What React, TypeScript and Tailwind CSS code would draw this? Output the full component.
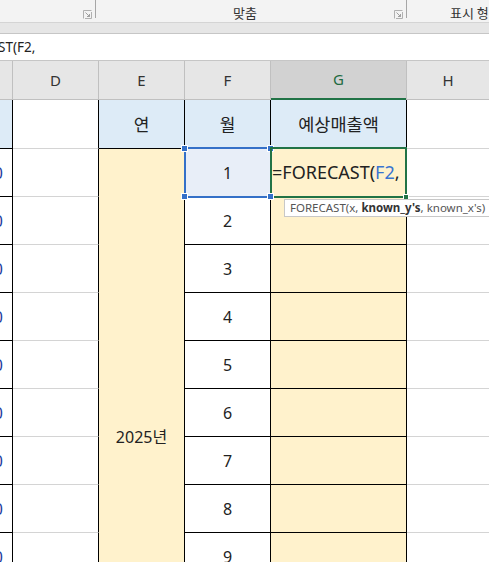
import React from "react";

const Launcher = () => (
  <svg width="9" height="9" viewBox="0 0 9 9" fill="none">
    <path d="M0.5 8.5V0.5H8.5" stroke="#b0b0b0" strokeWidth="1" />
    <path d="M8.5 2V8.5H2" stroke="#b0b0b0" strokeWidth="1" />
    <path d="M2.5 2.5L6.8 6.8" stroke="#a0a0a0" strokeWidth="1" />
    <path d="M4 6.5H6.5V4" stroke="#a0a0a0" strokeWidth="1" />
  </svg>
);

const rows = [1, 2, 3, 4, 5, 6, 7, 8, 9];

export default function App() {
  return (
    <div className="relative w-[489px] h-[562px] overflow-hidden bg-white font-['Noto_Sans','Noto_Sans_CJK_KR',sans-serif] text-[#222]">
      {/* Ribbon */}
      <div className="flex h-[23px] bg-[#f3f3f3] border-b border-[#d4d4d4] overflow-hidden">
        <div className="w-[96px] shrink-0 flex justify-end items-start">
          <div className="mt-[10px] mr-[3px]">
            <Launcher />
          </div>
          <div className="w-px h-[18px] bg-[#a6a6a6]" />
        </div>
        <div className="w-[311px] shrink-0 flex items-start">
          <div className="flex-1 pt-[4px] text-center text-[13px] leading-[17px] font-['Noto_Sans_CJK_KR',sans-serif] text-[#333]">
            맞춤
          </div>
          <div className="mt-[10px] mr-[3px]">
            <Launcher />
          </div>
          <div className="w-px h-[18px] bg-[#a6a6a6]" />
        </div>
        <div className="flex-1 min-w-0 pt-[4px] pl-[43px] text-[13px] leading-[17px] whitespace-nowrap font-['Noto_Sans_CJK_KR',sans-serif] text-[#333]">
          표시 형식
        </div>
      </div>
      {/* gray band */}
      <div className="h-[11px] bg-[#e6e6e6] border-b border-[#c6c6c6]" />
      {/* formula bar */}
      <div className="h-[27px] bg-white border-b border-[#c6c6c6] flex items-center overflow-hidden">
        <span className="-ml-[2px] text-[13.5px] leading-[18px] text-[#222] whitespace-nowrap">ST(F2,</span>
      </div>

      {/* Grid */}
      <div className="flex h-[501px] overflow-hidden text-[16px]">
        {/* Column C (partial) */}
        <div className="w-[13px] shrink-0 flex flex-col">
          <div className="h-[39px] bg-[#e6e6e6] border-b border-r border-[#c0c0c0] shrink-0" />
          <div className="h-[49px] bg-[#ddebf7] border-b border-r border-black shrink-0" />
          {rows.map((r) => (
            <div
              key={r}
              className="h-[48px] shrink-0 border-b border-r border-black flex items-center justify-end overflow-hidden"
            >
              <span className="mr-[9px] text-[#1d3d9e] whitespace-nowrap">0</span>
            </div>
          ))}
        </div>
        {/* Column D */}
        <div className="w-[86px] shrink-0 flex flex-col">
          <div className="h-[39px] bg-[#e6e6e6] border-b border-r border-[#c0c0c0] shrink-0 flex items-center justify-center text-[15px] text-[#333]">
            D
          </div>
          <div className="h-[49px] border-b border-r border-[#d4d4d4] border-r-black shrink-0" />
          {rows.map((r) => (
            <div key={r} className="h-[48px] shrink-0 border-b border-r border-[#d4d4d4] border-r-black" />
          ))}
        </div>
        {/* Column E */}
        <div className="w-[86px] shrink-0 flex flex-col">
          <div className="h-[39px] bg-[#e6e6e6] border-b border-r border-[#c0c0c0] shrink-0 flex items-center justify-center text-[15px] text-[#333]">
            E
          </div>
          <div className="h-[49px] bg-[#ddebf7] border-b border-r border-black shrink-0 flex items-center justify-center text-[17px] font-['Noto_Sans_CJK_KR',sans-serif]">
            연
          </div>
          <div className="h-[576px] shrink-0 bg-[#fff2cc] border-r border-black flex items-center justify-center">
            <span>2025년</span>
          </div>
        </div>
        {/* Column F */}
        <div className="w-[86px] shrink-0 flex flex-col">
          <div className="h-[39px] bg-[#e6e6e6] border-b border-r border-[#c0c0c0] shrink-0 flex items-center justify-center text-[15px] text-[#333]">
            F
          </div>
          <div className="h-[49px] bg-[#ddebf7] border-b border-r border-black shrink-0 flex items-center justify-center text-[17px] font-['Noto_Sans_CJK_KR',sans-serif]">
            월
          </div>
          {rows.map((r) => (
            <div
              key={r}
              className={`h-[48px] shrink-0 border-b border-r border-black flex items-center justify-center ${
                r === 1 ? "bg-[#e8eef8]" : "bg-white"
              }`}
            >
              {r}
            </div>
          ))}
        </div>
        {/* Column G */}
        <div className="w-[136px] shrink-0 flex flex-col">
          <div className="h-[39px] bg-[#d2d2d2] border-r border-[#c0c0c0] shrink-0 flex flex-col">
            <div className="flex-1 flex items-center justify-center text-[15px] text-[#1e6b41]">G</div>
            <div className="h-[2px] bg-[#217346]" />
          </div>
          <div className="h-[49px] bg-[#ddebf7] border-b border-r border-black shrink-0 flex items-center justify-center text-[17.5px] font-['Noto_Sans_CJK_KR',sans-serif]">
            예상매출액
          </div>
          {rows.map((r) => (
            <div key={r} className="h-[48px] shrink-0 bg-[#fff2cc] border-b border-r border-black flex items-center">
              {r === 1 ? (
                <span className="pl-[1px] whitespace-nowrap text-[18px]">
                  =FORECAST(<span className="text-[#3a74d0]">F2</span>,
                </span>
              ) : null}
            </div>
          ))}
        </div>
        {/* Column H */}
        <div className="flex-1 flex flex-col">
          <div className="h-[39px] bg-[#e6e6e6] border-b border-[#c0c0c0] shrink-0 flex items-center justify-center text-[15px] text-[#333]">
            H
          </div>
          <div className="h-[49px] border-b border-[#d4d4d4] shrink-0" />
          {rows.map((r) => (
            <div key={r} className="h-[48px] shrink-0 border-b border-[#d4d4d4]" />
          ))}
        </div>
      </div>

      {/* Selection overlay on F row 1 */}
      <div className="absolute left-[184px] top-[147px] w-[88px] h-[51px] border-2 border-[#3470c8] pointer-events-none" />
      <div className="absolute left-[181px] top-[145px] w-[7px] h-[7px] bg-[#3470c8] border border-white" />
      <div className="absolute left-[181px] top-[193px] w-[7px] h-[7px] bg-[#3470c8] border border-white" />
      <div className="absolute left-[267px] top-[145px] w-[7px] h-[7px] bg-[#3470c8] border border-white" />

      {/* Active cell G row 1 */}
      <div className="absolute left-[270px] top-[147px] w-[137px] h-[51px] border-2 border-[#217346] pointer-events-none" />
      <div className="absolute left-[267px] top-[193px] w-[7px] h-[7px] bg-[#3470c8] border border-white" />
      <div className="absolute left-[403px] top-[194px] w-[6px] h-[6px] bg-[#217346] border border-white" />

      {/* Tooltip */}
      <div className="absolute left-[284px] top-[199px] h-[18px] pl-[5px] pr-[8px] bg-white border border-[#c8c8c8] flex items-center whitespace-nowrap text-[11.5px] leading-[14px] text-[#555]">
        FORECAST(x, <span className="font-bold text-[#333]">&nbsp;known_y's</span>, known_x's)
      </div>
    </div>
  );
}
